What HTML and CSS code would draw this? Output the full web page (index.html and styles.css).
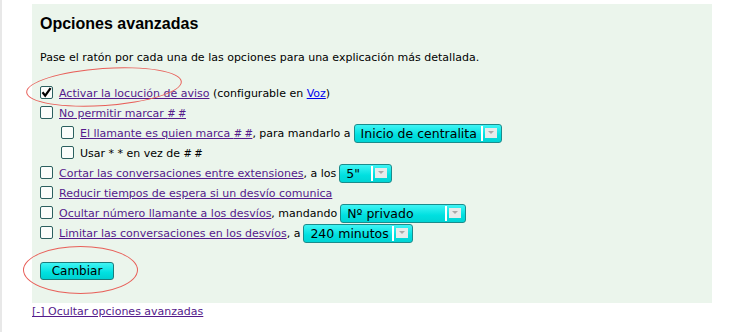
FILE: index.html
```html
<!DOCTYPE html>
<html lang="es">
<head>
<meta charset="utf-8">
<link rel="stylesheet" href="styles.css">
</head>
<body>
<div class="page">
  <div class="panel">
    <h2 class="title">Opciones avanzadas</h2>
    <p class="intro">Pase el ratón por cada una de las opciones para una explicación más detallada.</p>
    <div class="options">
      <div class="row"><span class="cb checked"><svg viewBox="0 0 13 13" width="13" height="13"><path d="M2.5 6.2 L5.2 9.6 L10.6 2.2" fill="none" stroke="#000" stroke-width="2.2"/></svg></span><a href="#" class="v">Activar la locución de aviso</a>&nbsp;(configurable en <a href="#" class="b">Voz</a>)</div>
      <div class="row"><span class="cb"></span><a href="#" class="v">No permitir marcar <span class="hh"># #</span></a></div>
      <div class="row sub"><span class="cb"></span><a href="#" class="v">El llamante es quien marca <span class="hh"># #</span></a>, para mandarlo a<span class="sel w148"><span class="sel-t">Inicio de centralita</span><span class="sel-d"></span><span class="sel-a"></span></span></div>
      <div class="row sub"><span class="cb"></span>Usar * * en vez de <span class="hh"># #</span></div>
      <div class="row"><span class="cb"></span><a href="#" class="v">Cortar las conversaciones entre extensiones</a>, a los<span class="sel w53"><span class="sel-t">5"</span><span class="sel-d"></span><span class="sel-a"></span></span></div>
      <div class="row"><span class="cb"></span><a href="#" class="v">Reducir tiempos de espera si un desvío comunica</a></div>
      <div class="row"><span class="cb"></span><a href="#" class="v">Ocultar número llamante a los desvíos</a>, mandando<span class="sel w126"><span class="sel-t">Nº privado</span><span class="sel-d"></span><span class="sel-a"></span></span></div>
      <div class="row"><span class="cb"></span><a href="#" class="v">Limitar las conversaciones en los desvíos</a>, a<span class="sel w110"><span class="sel-t">240 minutos</span><span class="sel-d"></span><span class="sel-a"></span></span></div>
    </div>
    <div class="actions"><span class="btn">Cambiar</span></div>
    <span class="ring ring1"></span>
    <span class="ring ring2"></span>
  </div>
  <a href="#" class="v toggle">[-] Ocultar opciones avanzadas</a>
</div>
</body>
</html>
```
FILE: styles.css
```css
html, body {
  margin: 0;
  padding: 0;
  background: #fff;
}
body {
  font-family: "DejaVu Sans", sans-serif;
  font-size: 11px;
  color: #000;
}
.page {
  border-left: 2px solid #e8e8e8;
  height: 332px;
  box-sizing: border-box;
  padding: 4px 0 0 30px;
}
.panel {
  position: relative;
  width: 680px;
  height: 299px;
  box-sizing: border-box;
  background: #ebf5ec;
  padding: 0 8px;
}
.title {
  margin: 0;
  padding-top: 9px;
  font-family: "Liberation Sans", Arial, sans-serif;
  font-size: 16px;
  font-weight: bold;
  line-height: 22px;
}
.intro {
  margin: 0;
  padding-top: 15px;
  line-height: 16px;
}
.options {
  padding-top: 17px;
  display: flex;
  flex-direction: column;
}
.row {
  display: flex;
  align-items: center;
  height: 20px;
  white-space: pre;
}
.row.sub {
  padding-left: 21px;
}
.hh {
  font-size: 10px;
  letter-spacing: -0.4px;
}
a.v {
  color: #551a8b;
  text-decoration: underline;
}
a.b {
  color: #0000ee;
  text-decoration: underline;
}
.cb {
  width: 11px;
  height: 11px;
  border: 1px solid #2b5f5f;
  border-radius: 2px;
  background: #fbfdfb;
  margin-right: 6px;
  flex: none;
  position: relative;
  top: -1px;
}
.cb svg {
  display: block;
  margin: -1px;
}
.sel {
  display: inline-flex;
  align-items: center;
  height: 19px;
  box-sizing: border-box;
  border: 1px solid #1a8c8c;
  border-radius: 3px;
  background: linear-gradient(#3ff4f4, #00e0e0 60%, #00d4d4);
  font-size: 12.5px;
  margin-left: 3px;
}
.sel-t {
  flex: 1;
  padding-left: 6px;
}
.sel-d {
  width: 2px;
  height: 15px;
  background: #fff;
  margin-right: 2px;
}
.sel-a {
  width: 12px;
  height: 10px;
  background: #e6eaea;
  margin-right: 4px;
  position: relative;
}
.sel-a::after {
  content: "";
  position: absolute;
  left: 3px;
  top: 3px;
  border-left: 3px solid transparent;
  border-right: 3px solid transparent;
  border-top: 3px solid #a8a8a8;
}
.w148 { width: 148px; }
.w53 { width: 53px; }
.w126 { width: 126px; }
.w110 { width: 110px; }
.actions {
  padding-top: 19px;
}
.btn {
  display: inline-block;
  width: 74px;
  height: 18px;
  line-height: 16px;
  box-sizing: border-box;
  border: 1px solid #1a7c7c;
  border-radius: 3px;
  background: linear-gradient(#40f4f4, #00e0e0 60%, #00d0d0);
  font-size: 12px;
  text-align: center;
}
.toggle {
  display: inline-block;
  margin-top: 1px;
  line-height: 16px;
}
.ring {
  position: absolute;
  border: 1px solid #e8605a;
  border-radius: 50%;
}
.ring1 {
  left: -6px;
  top: 64px;
  width: 154px;
  height: 36px;
  transform: rotate(-4deg);
}
.ring2 {
  left: -9px;
  top: 242px;
  width: 113px;
  height: 46px;
}
```
